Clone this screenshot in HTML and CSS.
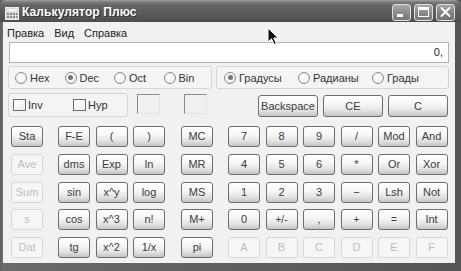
FILE: index.html
```html
<!DOCTYPE html>
<html lang="ru">
<head>
<meta charset="utf-8">
<title>Калькулятор Плюс</title>
<link rel="stylesheet" href="styles.css">
</head>
<body>
<div class="window">
  <div class="titlebar">
    <svg class="app-icon" width="14" height="13" viewBox="0 0 14 13">
      <rect x="0.5" y="0.5" width="13" height="12" fill="#d8d8d8" stroke="#eee"/>
      <rect x="2" y="2" width="10" height="2.5" fill="#f4f4f4"/>
      <rect x="2" y="6" width="2" height="2" fill="#888"/><rect x="5" y="6" width="2" height="2" fill="#888"/><rect x="8" y="6" width="2" height="2" fill="#888"/><rect x="11" y="6" width="1.5" height="2" fill="#888"/>
      <rect x="2" y="9" width="2" height="2" fill="#888"/><rect x="5" y="9" width="2" height="2" fill="#888"/><rect x="8" y="9" width="2" height="2" fill="#888"/><rect x="11" y="9" width="1.5" height="2" fill="#888"/>
    </svg>
    <span class="title">Калькулятор Плюс</span>
    <div class="controls">
      <span class="ctl"><svg width="17" height="16" viewBox="0 0 17 16"><rect x="4" y="10" width="6" height="3" fill="#fff"/></svg></span>
      <span class="ctl"><svg width="17" height="16" viewBox="0 0 17 16"><rect x="3.5" y="3.5" width="10" height="9" fill="none" stroke="#fff" stroke-width="1"/><rect x="3.5" y="3.5" width="10" height="2.5" fill="#fff"/></svg></span>
      <span class="ctl close"><svg width="17" height="16" viewBox="0 0 17 16"><path d="M4.5 4 L12.5 12 M12.5 4 L4.5 12" stroke="#fff" stroke-width="2" stroke-linecap="round"/></svg></span>
    </div>
  </div>
  <div class="body">
    <nav class="menu"><span>Правка</span><span>Вид</span><span>Справка</span></nav>
    <div class="display">0,</div>
    <div class="group-row">
      <div class="group radix">
        <label class="opt"><span class="radio"></span>Hex</label>
        <label class="opt"><span class="radio on"></span>Dec</label>
        <label class="opt"><span class="radio"></span>Oct</label>
        <label class="opt"><span class="radio"></span>Bin</label>
      </div>
      <div class="group angle">
        <label class="opt"><span class="radio on"></span>Градусы</label>
        <label class="opt"><span class="radio"></span>Радианы</label>
        <label class="opt"><span class="radio"></span>Грады</label>
      </div>
    </div>
    <div class="second-row">
      <div class="group invhyp">
        <label class="opt"><span class="check"></span>Inv</label>
        <label class="opt"><span class="check"></span>Hyp</label>
      </div>
      <div class="well well1"></div>
      <div class="well well2"></div>
      <div class="edit-keys">
        <button class="key wide">Backspace</button>
        <button class="key wide">CE</button>
        <button class="key wide">C</button>
      </div>
    </div>
    <div class="keys">
      <div class="kcol stat">
        <button class="key">Sta</button>
        <button class="key off">Ave</button>
        <button class="key off">Sum</button>
        <button class="key off">s</button>
        <button class="key off">Dat</button>
      </div>
      <div class="kgrid sci">
        <button class="key">F-E</button><button class="key">(</button><button class="key">)</button>
        <button class="key">dms</button><button class="key">Exp</button><button class="key">ln</button>
        <button class="key">sin</button><button class="key">x^y</button><button class="key">log</button>
        <button class="key">cos</button><button class="key">x^3</button><button class="key">n!</button>
        <button class="key">tg</button><button class="key">x^2</button><button class="key">1/x</button>
      </div>
      <div class="kcol mem">
        <button class="key">MC</button>
        <button class="key">MR</button>
        <button class="key">MS</button>
        <button class="key">M+</button>
        <button class="key">pi</button>
      </div>
      <div class="kgrid num">
        <button class="key">7</button><button class="key">8</button><button class="key">9</button><button class="key">/</button><button class="key">Mod</button><button class="key">And</button>
        <button class="key">4</button><button class="key">5</button><button class="key">6</button><button class="key">*</button><button class="key">Or</button><button class="key">Xor</button>
        <button class="key">1</button><button class="key">2</button><button class="key">3</button><button class="key">&minus;</button><button class="key">Lsh</button><button class="key">Not</button>
        <button class="key">0</button><button class="key small">+/-</button><button class="key">,</button><button class="key small">+</button><button class="key small">=</button><button class="key">Int</button>
        <button class="key off">A</button><button class="key off">B</button><button class="key off">C</button><button class="key off">D</button><button class="key off">E</button><button class="key off">F</button>
      </div>
    </div>
  </div>
  <svg class="cursor" width="14" height="20" viewBox="0 0 14 20">
    <path d="M1 1 L1 15 L4.5 11.8 L7.2 17.5 L9.4 16.5 L6.8 11 L11.2 11 Z" fill="#111" stroke="#fff" stroke-width="1" stroke-linejoin="round"/>
  </svg>
</div>
</body>
</html>
```

FILE: styles.css
```css
* { box-sizing: border-box; }
html, body { margin: 0; padding: 0; }
body {
  width: 461px;
  height: 271px;
  overflow: hidden;
  font-family: "Liberation Sans", Arial, sans-serif;
  font-size: 11px;
  color: #333;
}
.window {
  position: relative;
  width: 461px;
  height: 271px;
  background: linear-gradient(90deg, #5e5e5e 0, #6a6a6a 2px, #555 100%);
  display: flex;
  flex-direction: column;
}
.titlebar {
  height: 22px;
  flex: none;
  display: flex;
  align-items: center;
  padding: 2px 0 0 5px;
  border-radius: 6px 6px 0 0;
  background: linear-gradient(#a2a2a2 0, #7c7c7c 2px, #666 5px, #5c5c5c 11px, #555 18px, #4d4d4d 22px);
}
.app-icon { flex: none; margin-top: 2px; }
.title {
  margin-left: 3px;
  color: #fff;
  font-weight: bold;
  font-size: 12px;
  letter-spacing: 0.1px;
  text-shadow: 1px 1px 0 #333;
}
.controls {
  margin-left: auto;
  margin-right: 6px;
  display: flex;
  gap: 3px;
}
.ctl {
  width: 19px;
  height: 17px;
  border: 1px solid #e0e0e0;
  border-radius: 3px;
  background: linear-gradient(#aaaaaa, #868686 60%, #767676);
  display: flex;
  align-items: center;
  justify-content: center;
}
.ctl.close { background: linear-gradient(#a4a4a4, #7e7e7e 60%, #727272); }
.body {
  flex: 1;
  margin: 0 6px 8px 3px;
  background: #f1f1f1;
  display: flex;
  flex-direction: column;
}
.menu {
  height: 16px;
  display: flex;
  align-items: center;
  gap: 10px;
  padding-left: 4px;
  color: #222;
  margin-top: 3px;
}
.display {
  margin: 1px 0 0 6px;
  width: 440px;
  height: 21px;
  background: #fff;
  border: 1px solid #b4b4b4;
  text-align: right;
  padding: 3px 5px 0 0;
  color: #222;
}
.group-row {
  margin-top: 3px;
  height: 23px;
  display: flex;
  gap: 4px;
  padding-left: 5px;
}
.group {
  border: 1px solid #d6d6d6;
  border-radius: 3px;
  background: #f4f4f4;
  display: grid;
  align-items: center;
}
.radix { width: 204px; grid-template-columns: repeat(4, 49.5px); padding-left: 6px; }
.angle { width: 233px; grid-template-columns: repeat(3, 74px); padding-left: 7px; }
.invhyp { width: 120px; height: 24px; grid-template-columns: repeat(2, 60px); padding-left: 4px; }
.opt {
  display: flex;
  align-items: center;
  color: #333;
  white-space: nowrap;
}
.radio {
  width: 12px;
  height: 12px;
  border: 1px solid #8c8c8c;
  border-radius: 50%;
  background: radial-gradient(circle at 40% 40%, #fff 0, #f2f2f2 60%, #dcdcdc 100%);
  margin-right: 3px;
  display: flex;
  align-items: center;
  justify-content: center;
  flex: none;
}
.radio.on::after {
  content: "";
  width: 5px;
  height: 5px;
  border-radius: 50%;
  background: #777;
}
.check {
  width: 13px;
  height: 12px;
  border: 1px solid #6c6c6c;
  background: linear-gradient(135deg, #fff, #ececec);
  margin-right: 2px;
  flex: none;
}
.second-row {
  margin-top: 4px;
  height: 24px;
  display: flex;
  align-items: flex-start;
  padding-left: 5px;
}
.well {
  width: 23px;
  height: 20px;
  margin-top: 1px;
  border-top: 1px solid #8a8a8a;
  border-left: 1px solid #8a8a8a;
  border-right: 1px solid #e4e4e4;
  border-bottom: 1px solid #e4e4e4;
  background: #f1f1f1;
}
.well1 { margin-left: 9px; }
.well2 { margin-left: 24px; }
.edit-keys {
  margin-left: 51px;
  margin-top: 2px;
  display: flex;
  gap: 5px;
}
.key {
  width: 32px;
  height: 21px;
  padding: 0;
  margin: 0;
  font: inherit;
  font-size: 11px;
  color: #3c3c3c;
  border: 1px solid #6e6e6e;
  border-radius: 3px;
  background: linear-gradient(#ffffff 0%, #f7f7f7 40%, #e4e4e4 72%, #c4c4c4 100%);
  display: flex;
  align-items: center;
  justify-content: center;
  line-height: 1;
}
.key.wide { width: 60px; height: 22px; }
.key.small { font-size: 10px; }
.key.off {
  color: #bdbdbd;
  border-color: #d8d8d8;
  background: #f6f6f6;
}
.keys {
  margin-top: 9px;
  padding-left: 8px;
  display: flex;
}
.kcol {
  display: grid;
  grid-template-columns: 32px;
  grid-auto-rows: 21px;
  row-gap: 6.75px;
}
.kgrid {
  display: grid;
  grid-auto-rows: 21px;
  row-gap: 6.75px;
  column-gap: 5.5px;
}
.sci { margin-left: 15px; grid-template-columns: repeat(3, 32px); }
.mem { margin-left: 16px; }
.num { margin-left: 15px; grid-template-columns: repeat(6, 32px); }
.cursor {
  position: absolute;
  left: 267px;
  top: 27px;
}
```
